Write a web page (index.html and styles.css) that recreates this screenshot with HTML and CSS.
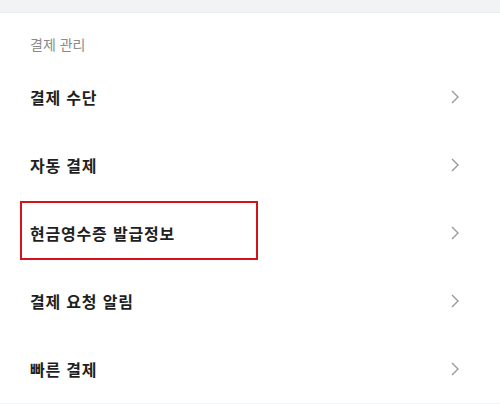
FILE: index.html
```html
<!DOCTYPE html>
<html lang="ko">
<head>
    <meta charset="UTF-8">
    <title>결제 관리</title>
    <link rel="stylesheet" href="styles.css">
</head>
<body>

<div class="card">
    <h3 class="section-title">결제 관리</h3>
    <ul class="menu">
        <li class="menu-item"><span class="label">결제 수단</span><svg class="chev" width="8" height="14" viewBox="0 0 8 14"><path d="M1 1l6 6-6 6" fill="none" stroke="#999" stroke-width="1.4"/></svg></li>
        <li class="menu-item"><span class="label">자동 결제</span><svg class="chev" width="8" height="14" viewBox="0 0 8 14"><path d="M1 1l6 6-6 6" fill="none" stroke="#999" stroke-width="1.4"/></svg></li>
        <!-- 강조 표시 -->
        <li class="menu-item marked"><span class="label">현금영수증 발급정보</span><svg class="chev" width="8" height="14" viewBox="0 0 8 14"><path d="M1 1l6 6-6 6" fill="none" stroke="#999" stroke-width="1.4"/></svg><span class="highlight"></span></li>
        <li class="menu-item"><span class="label">결제 요청 알림</span><svg class="chev" width="8" height="14" viewBox="0 0 8 14"><path d="M1 1l6 6-6 6" fill="none" stroke="#999" stroke-width="1.4"/></svg></li>
        <li class="menu-item"><span class="label">빠른 결제</span><svg class="chev" width="8" height="14" viewBox="0 0 8 14"><path d="M1 1l6 6-6 6" fill="none" stroke="#999" stroke-width="1.4"/></svg></li>
    </ul>
</div>

</body>
</html>
```

FILE: styles.css
```css
body { margin: 0; padding-top: 12px; background: #f2f3f5; font-family: "Noto Sans CJK KR", "Noto Sans", sans-serif; color: #222; }
.card { background: #fff; border-top: 1px solid #ececee; }
.section-title { margin: 0; padding: 22px 30px 10px; font-size: 14px; line-height: 18px; font-weight: normal; color: #8a8a8a; }
.menu { list-style: none; margin: 0; padding: 0; }
.menu-item { position: relative; display: flex; align-items: center; justify-content: space-between; height: 68px; padding: 0 41px 0 30px; }
.label { font-size: 16px; line-height: 20px; font-weight: bold; letter-spacing: 0.8px; color: #1f1f1f; }
.chev { display: block; }
.highlight { position: absolute; left: 20px; top: 2px; width: 234px; height: 55px; border: 2px solid #d3121b; }
```
